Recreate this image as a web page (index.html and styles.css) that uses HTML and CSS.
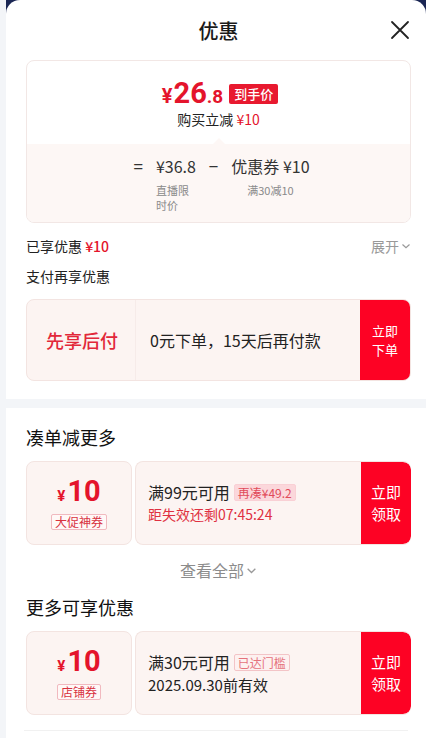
FILE: index.html
```html
<!DOCTYPE html>
<html lang="zh-CN">
<head>
  <meta charset="UTF-8">
  <meta name="viewport" content="width=device-width, initial-scale=1.0">
  <title>优惠</title>
  <link rel="stylesheet" href="styles.css">
</head>
<body>
  <div class="page">
    <section class="panel panel-top">
      <header class="sheet-head">
        <h1>优惠</h1>
        <button class="close" aria-label="关闭">
          <svg width="20" height="20" viewBox="0 0 20 20"><path d="M2 2 L18 18 M18 2 L2 18" stroke="#222" stroke-width="1.8" stroke-linecap="round" fill="none"/></svg>
        </button>
      </header>

      <div class="calc-card">
        <div class="calc-top">
          <div class="final-price">
            <span class="yen">¥</span><span class="int">26</span><span class="dec">.8</span>
            <span class="price-tag">到手价</span>
          </div>
          <div class="cut">购买立减 <span class="red">¥10</span></div>
        </div>
        <div class="calc-bottom">
          <div class="formula">
            <span class="op">=</span>
            <div class="term term-a">
              <div class="val">¥36.8</div>
              <div class="lbl">直播限时价</div>
            </div>
            <span class="op">−</span>
            <div class="term term-b">
              <div class="val">优惠券 ¥10</div>
              <div class="lbl">满30减10</div>
            </div>
          </div>
        </div>
      </div>

      <div class="enjoyed">
        <span>已享优惠 <b class="red">¥10</b></span>
        <span class="more">展开
          <svg width="10" height="10" viewBox="0 0 10 10"><path d="M1.5 3.5 L5 6.8 L8.5 3.5" stroke="#999" stroke-width="1.2" fill="none"/></svg>
        </span>
      </div>
      <div class="sub">支付再享优惠</div>

      <div class="pay-card">
        <div class="pay-name">先享后付</div>
        <div class="pay-desc">0元下单，15天后再付款</div>
        <button class="act"><span>立即</span><span>下单</span></button>
      </div>
    </section>

    <section class="panel panel-bottom">
      <h2>凑单减更多</h2>
      <div class="coupon">
        <div class="stub">
          <div class="amount"><span class="cy">¥</span>10</div>
          <span class="kind">大促神券</span>
        </div>
        <div class="coupon-main">
          <div class="info">
            <div class="rule">满99元可用 <span class="pill pill-fill">再凑¥49.2</span></div>
            <div class="timer">距失效还剩07:45:24</div>
          </div>
          <button class="act"><span>立即</span><span>领取</span></button>
        </div>
      </div>
      <div class="see-all">查看全部
        <svg width="11" height="11" viewBox="0 0 10 10"><path d="M1.5 3.5 L5 6.8 L8.5 3.5" stroke="#999" stroke-width="1.2" fill="none"/></svg>
      </div>

      <h2>更多可享优惠</h2>
      <div class="coupon">
        <div class="stub">
          <div class="amount"><span class="cy">¥</span>10</div>
          <span class="kind">店铺券</span>
        </div>
        <div class="coupon-main">
          <div class="info">
            <div class="rule">满30元可用 <span class="pill pill-line">已达门槛</span></div>
            <div class="date">2025.09.30前有效</div>
          </div>
          <button class="act"><span>立即</span><span>领取</span></button>
        </div>
      </div>
      <div class="rule-line"></div>
    </section>
  </div>
</body>
</html>
```

FILE: styles.css
```css
body {
  margin: 0;
  font-family: "Noto Sans CJK SC", "Noto Sans", sans-serif;
  background: #f3f5f8;
  color: #222;
}
button {
  font-family: inherit;
  border: none;
  cursor: pointer;
}
.page {
  width: 426px;
  height: 738px;
  overflow: hidden;
  background: linear-gradient(#1b2754, #1b2754) no-repeat 6px 0 / 100% 18px, #f3f5f8;
}
.panel {
  margin-left: 6px;
  background: #fff;
  padding: 0 15px 0 20px;
}
.panel-top {
  border-radius: 14px 14px 0 0;
  padding-bottom: 18px;
}
.panel-bottom {
  margin-top: 9px;
  padding-top: 17px;
  height: 340px;
}
.sheet-head {
  height: 60px;
  display: flex;
  align-items: center;
  justify-content: center;
  position: relative;
}
.sheet-head h1 {
  margin: 0;
  font-size: 20px;
  font-weight: 500;
  color: #1a1a1a;
}
.close {
  position: absolute;
  right: 1px;
  top: 20px;
  background: none;
  padding: 0;
  width: 20px;
  height: 20px;
}
.red {
  color: #e4142c;
}

.calc-card {
  border: 1px solid #f2e7e5;
  border-radius: 8px;
  overflow: hidden;
}
.calc-top {
  height: 83px;
  display: flex;
  flex-direction: column;
  align-items: center;
  padding-top: 19px;
  box-sizing: border-box;
}
.final-price {
  display: flex;
  align-items: baseline;
  color: #e4142c;
  font-family: Roboto, "Noto Sans CJK SC", sans-serif;
  font-weight: 700;
  height: 27px;
  line-height: 27px;
  margin-left: 3px;
}
.final-price .yen {
  font-size: 20px;
}
.final-price .int {
  font-size: 29px;
  margin-left: 1px;
}
.final-price .dec {
  font-size: 19px;
}
.price-tag {
  align-self: center;
  margin-left: 6px;
  background: #e8192f;
  color: #fff;
  font-family: "Noto Sans CJK SC", sans-serif;
  font-size: 13px;
  font-weight: 500;
  line-height: 20px;
  padding: 0 5px;
  border-radius: 2px;
}
.cut {
  margin-top: 3px;
  font-size: 14px;
  line-height: 18px;
  color: #222;
}
.calc-bottom {
  position: relative;
  background: #fdf7f5;
  height: 78px;
  padding-top: 11px;
  box-sizing: border-box;
}
.calc-bottom::before {
  content: "";
  position: absolute;
  left: 50%;
  top: -6px;
  margin-left: -6px;
  border: 6px solid transparent;
  border-top: 0;
  border-bottom-color: #fdf7f5;
}
.formula {
  display: flex;
  justify-content: center;
  align-items: flex-start;
  gap: 13px;
  color: #333;
  margin-left: 6px;
}
.op {
  font-size: 17px;
  line-height: 22px;
}
.val {
  font-size: 16px;
  line-height: 22px;
  white-space: nowrap;
}
.lbl {
  font-size: 11px;
  line-height: 15px;
  color: #8a8a8a;
  margin-top: 6px;
}
.term-a .lbl {
  width: 36px;
}
.term-b {
  text-align: center;
}

.enjoyed {
  display: flex;
  justify-content: space-between;
  align-items: center;
  margin-top: 13px;
  font-size: 14px;
  line-height: 20px;
}
.enjoyed b {
  font-weight: 500;
}
.more {
  color: #999;
  display: flex;
  align-items: center;
  gap: 2px;
}
.sub {
  margin-top: 10px;
  font-size: 14px;
  line-height: 20px;
}

.pay-card {
  margin-top: 13px;
  height: 82px;
  display: flex;
  align-items: center;
  background: #fcf4f2;
  border: 1px solid #f3e4e1;
  border-radius: 8px;
  overflow: hidden;
  box-sizing: border-box;
}
.pay-name {
  width: 106px;
  height: 100%;
  display: flex;
  align-items: center;
  justify-content: center;
  color: #e2283a;
  font-size: 18px;
  font-weight: 500;
  border-right: 1px solid #f6ebe9;
  padding-left: 2px;
}
.pay-desc {
  flex: 1;
  padding-left: 14px;
  font-size: 16px;
}
.act {
  width: 50px;
  height: 100%;
  align-self: stretch;
  background: #fd0224;
  color: #fff;
  font-size: 13px;
  line-height: 19px;
  padding: 0;
  display: flex;
  flex-direction: column;
  align-items: center;
  justify-content: center;
}

.panel-bottom h2 {
  margin: 0;
  font-size: 18px;
  font-weight: 400;
  line-height: 24px;
  color: #111;
}
.coupon {
  margin-top: 12px;
  height: 84px;
  display: flex;
  gap: 3px;
}
.stub {
  width: 106px;
  background: #fcf4f2;
  border: 1px solid #f3e4e1;
  border-radius: 8px;
  box-sizing: border-box;
  display: flex;
  flex-direction: column;
  align-items: center;
  justify-content: center;
}
.amount {
  color: #e4142c;
  font-family: Roboto, "Noto Sans CJK SC", sans-serif;
  font-weight: 700;
  font-size: 29px;
  line-height: 30px;
}
.amount .cy {
  font-size: 15px;
  margin-right: 2px;
}
.kind {
  margin-top: 3px;
  font-size: 12px;
  line-height: 14px;
  color: #d8323f;
  border: 1px solid #f1b9bf;
  border-radius: 2px;
  padding: 0 3px;
  background: #fff8f7;
}
.coupon-main {
  flex: 1;
  display: flex;
  background: #fcf4f2;
  border: 1px solid #f3e4e1;
  border-right: none;
  border-radius: 8px;
  overflow: hidden;
}
.coupon-main .act {
  border-radius: 0 8px 8px 0;
  font-size: 15px;
  line-height: 22px;
}
.info {
  flex: 1;
  padding-left: 12px;
  display: flex;
  flex-direction: column;
  justify-content: center;
}
.rule {
  font-size: 16px;
  line-height: 23px;
  display: flex;
  align-items: center;
  gap: 4px;
}
.pill {
  font-size: 12px;
  line-height: 15px;
  padding: 0 3px;
  border-radius: 2px;
}
.pill-fill {
  background: #fbd7db;
  color: #e14b5a;
  border: 1px solid #f9d0d5;
}
.pill-line {
  background: #fdf1f0;
  color: #e5727c;
  border: 1px solid #f3c4c7;
}
.timer {
  font-size: 14px;
  line-height: 21px;
  color: #df3041;
}
.date {
  font-size: 15px;
  line-height: 22px;
  color: #222;
}
.see-all {
  margin: 13px 0 13px;
  text-align: center;
  font-size: 16px;
  line-height: 24px;
  color: #8c8c8c;
  display: flex;
  justify-content: center;
  align-items: center;
  gap: 2px;
}
.panel-bottom .coupon:last-of-type {
  height: 82px;
}
.rule-line {
  margin: 15px 3px 0 -2px;
  border-top: 1px solid #f1f1f1;
}
```
